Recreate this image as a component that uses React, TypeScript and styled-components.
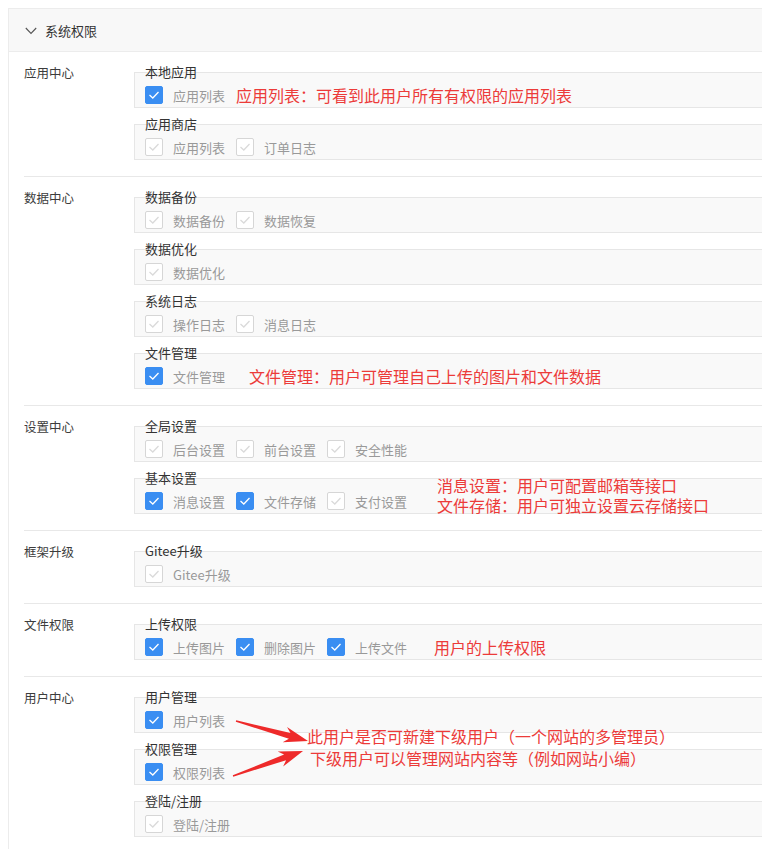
import styled, { createGlobalStyle } from 'styled-components';

type Item = { text: string; on?: boolean };
type Note = { lines: string[]; gap: number };
type Group = { title: string; items: Item[]; note?: Note };
type Section = { label: string; groups: Group[]; overlay?: boolean };

const off = (...names: string[]): Item[] => names.map((text) => ({ text }));
const on = (...names: string[]): Item[] => names.map((text) => ({ text, on: true }));

const sections: Section[] = [
  {
    label: '应用中心',
    groups: [
      { title: '本地应用', items: on('应用列表'), note: { lines: ['应用列表：可看到此用户所有有权限的应用列表'], gap: 0 } },
      { title: '应用商店', items: off('应用列表', '订单日志') },
    ],
  },
  {
    label: '数据中心',
    groups: [
      { title: '数据备份', items: off('数据备份', '数据恢复') },
      { title: '数据优化', items: off('数据优化') },
      { title: '系统日志', items: off('操作日志', '消息日志') },
      { title: '文件管理', items: on('文件管理'), note: { lines: ['文件管理：用户可管理自己上传的图片和文件数据'], gap: 13 } },
    ],
  },
  {
    label: '设置中心',
    groups: [
      { title: '全局设置', items: off('后台设置', '前台设置', '安全性能') },
      {
        title: '基本设置',
        items: [...on('消息设置', '文件存储'), ...off('支付设置')],
        note: { lines: ['消息设置：用户可配置邮箱等接口', '文件存储：用户可独立设置云存储接口'], gap: 19 },
      },
    ],
  },
  { label: '框架升级', groups: [{ title: 'Gitee升级', items: off('Gitee升级') }] },
  {
    label: '文件权限',
    groups: [{ title: '上传权限', items: on('上传图片', '删除图片', '上传文件'), note: { lines: ['用户的上传权限'], gap: 16 } }],
  },
  {
    label: '用户中心',
    overlay: true,
    groups: [
      { title: '用户管理', items: on('用户列表') },
      { title: '权限管理', items: on('权限列表') },
      { title: '登陆/注册', items: off('登陆/注册') },
    ],
  },
];

// tapered annotation arrow from tail to tip
const arrow = (x1: number, y1: number, x2: number, y2: number) => {
  const dx = x2 - x1;
  const dy = y2 - y1;
  const len = Math.hypot(dx, dy);
  const ux = dx / len;
  const uy = dy / len;
  const nx = -uy;
  const ny = ux;
  const at = (d: number, w: number) => `${(x1 + ux * d + nx * w).toFixed(1)},${(y1 + uy * d + ny * w).toFixed(1)}`;
  return [at(0, -0.7), at(len - 19, -3), at(len - 24, -8), at(len, 0), at(len - 24, 8), at(len - 19, 3), at(0, 0.7)].join(' ');
};

const GlobalStyle = createGlobalStyle`
  body {
    margin: 8px 0 0 8px;
    overflow: hidden;
    background: #fff;
    font-family: "Noto Sans CJK SC", "Noto Sans", sans-serif;
  }
`;

const Panel = styled.div`
  width: 820px;
  border: 1px solid #ececec;
  border-right: none;
  background: #fff;
`;

const Header = styled.div`
  height: 42px;
  display: flex;
  align-items: center;
  gap: 8px;
  padding-left: 16px;
  background: #f8f8f8;
  border-bottom: 1px solid #ececec;
  font-size: 13px;
  color: #333;
`;

const Chevron = styled.svg`
  width: 12px;
  height: 8px;
  margin-top: 1px;
`;

const Block = styled.div`
  position: relative;
  display: grid;
  grid-template-columns: 110px 1fr;
  margin-left: 15px;
  padding: 12px 0 16px;
  border-bottom: 1px solid #e8e8e8;
`;

const Label = styled.div`
  font-size: 12.5px;
  line-height: 18px;
  color: #3c3c3c;
`;

const Groups = styled.div`
  display: flex;
  flex-direction: column;
  gap: 8px;
`;

const Title = styled.div`
  position: relative;
  z-index: 1;
  height: 16px;
  margin: 0 0 -8px 11px;
  font-size: 13px;
  line-height: 16px;
  color: #333;
`;

const Box = styled.div`
  height: 36px;
  box-sizing: border-box;
  padding: 13px 0 0 10px;
  border: 1px solid #e6e6e6;
  border-right: none;
  background: #f9f9f9;
`;

const Row = styled.div`
  display: flex;
  align-items: center;
  height: 18px;
`;

const Option = styled.div`
  display: flex;
  align-items: center;
  gap: 10px;
  margin-right: 11px;
  font-size: 13px;
  color: #999;
  white-space: nowrap;
`;

const Tick = styled.span<{ $on?: boolean }>`
  width: 18px;
  height: 18px;
  box-sizing: border-box;
  display: flex;
  align-items: center;
  justify-content: center;
  border-radius: 2px;
  border: 1px solid ${(p) => (p.$on ? '#3a8ef2' : '#d6d6d6')};
  background: ${(p) => (p.$on ? '#3a8ef2' : '#fff')};
`;

const Remark = styled.div<{ $gap: number; $lines: number }>`
  margin-left: ${(p) => p.$gap}px;
  margin-top: ${(p) => (p.$lines > 1 ? -17 : 0)}px;
  margin-bottom: ${(p) => (p.$lines > 1 ? -5 : 0)}px;
  font-size: 16px;
  line-height: 20px;
  color: #ec3b39;
  white-space: nowrap;
`;

const Callout = styled.div<{ $top: number; $left: number }>`
  position: absolute;
  top: ${(p) => p.$top}px;
  left: ${(p) => p.$left}px;
  font-size: 16px;
  line-height: 22px;
  color: #ec3b39;
  white-space: nowrap;
`;

const Arrows = styled.svg`
  position: absolute;
  left: 200px;
  top: 30px;
  width: 120px;
  height: 80px;
  overflow: visible;
`;

const Check = ({ on }: { on?: boolean }) => (
  <Tick $on={on}>
    <svg width="12" height="10" viewBox="0 0 12 10">
      <polyline points="1.5,5 4.8,8 10.5,2" fill="none" stroke={on ? '#fff' : '#dadada'} strokeWidth="1.3" />
    </svg>
  </Tick>
);

const App = () => {
  return (
    <>
      <GlobalStyle />
      <Panel>
        <Header>
          <Chevron viewBox="0 0 12 8">
            <polyline points="0.8,1 6,6.4 11.2,1" fill="none" stroke="#555" strokeWidth="1.1" />
          </Chevron>
          系统权限
        </Header>
        {sections.map((s) => (
          <Block key={s.label}>
            <Label>{s.label}</Label>
            <Groups>
              {s.groups.map((g) => (
                <div key={g.title}>
                  <Title>{g.title}</Title>
                  <Box>
                    <Row>
                      {g.items.map((it) => (
                        <Option key={it.text}>
                          <Check on={it.on} />
                          {it.text}
                        </Option>
                      ))}
                      {g.note && (
                        <Remark $gap={g.note.gap} $lines={g.note.lines.length}>
                          {g.note.lines.map((l) => (
                            <div key={l}>{l}</div>
                          ))}
                        </Remark>
                      )}
                    </Row>
                  </Box>
                </div>
              ))}
            </Groups>
            {s.overlay && (
              <>
                <Arrows viewBox="0 0 120 80">
                  <polygon points={arrow(12, 14, 84, 34)} fill="#ee2a2a" />
                  <polygon points={arrow(9, 69, 79, 44)} fill="#ee2a2a" />
                </Arrows>
                <Callout $top={48} $left={283}>此用户是否可新建下级用户（一个网站的多管理员）</Callout>
                <Callout $top={70} $left={286}>下级用户可以管理网站内容等（例如网站小编）</Callout>
              </>
            )}
          </Block>
        ))}
      </Panel>
    </>
  );
};

export default App;
